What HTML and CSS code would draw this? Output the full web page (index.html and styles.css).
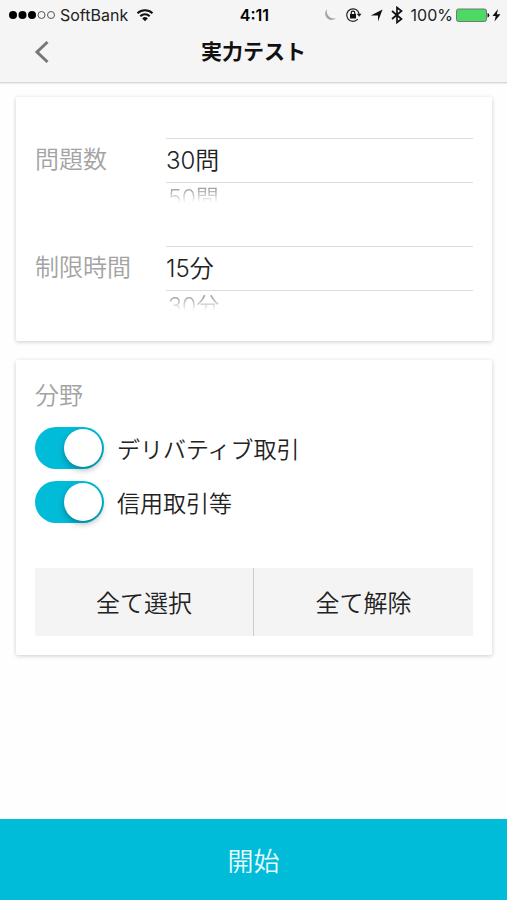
FILE: index.html
```html
<!DOCTYPE html>
<html lang="ja">
<head>
<meta charset="utf-8">
<meta name="viewport" content="width=device-width, initial-scale=1">
<title>実力テスト</title>
<link rel="stylesheet" href="styles.css">
</head>
<body>
<header class="header">
  <div class="status">
    <div class="status-left">
      <svg class="icon" width="48" height="16" viewBox="0 0 48 16" aria-hidden="true">
        <g fill="#000"><circle cx="5" cy="8" r="4"/><circle cx="14.500" cy="8" r="4"/><circle cx="24" cy="8" r="4"/></g>
        <g fill="none" stroke="#555" stroke-width="1"><circle cx="33.500" cy="8" r="3.500"/><circle cx="43" cy="8" r="3.500"/></g>
      </svg>
      <span class="carrier">SoftBank</span>
      <svg class="icon" width="18" height="14" viewBox="0 0 18 14" aria-hidden="true">
        <g fill="none" stroke="#111" stroke-width="2"><path d="M1.500 5.200a10.800 10.800 0 0 1 15 0"/><path d="M4.300 8.200a6.700 6.700 0 0 1 9.400 0"/></g>
        <path d="M9 13.200 6.200 10.400a4 4 0 0 1 5.600 0z" fill="#111"/>
      </svg>
    </div>
    <time class="clock">4:11</time>
    <div class="status-right">
      <svg class="icon" width="14" height="14" viewBox="0 0 14 14" aria-hidden="true"><path d="M4.200 1A6.300 6.300 0 1 0 13 10 7 7 0 0 1 4.200 1z" fill="#a5a5a5"/></svg>
      <svg class="icon" width="17" height="16" viewBox="0 0 17 16" aria-hidden="true">
        <path d="M12.800 12.200A6.300 6.300 0 1 1 14.200 7" fill="none" stroke="#222" stroke-width="1.200"/>
        <path d="M11.600 6.800h5L14.200 9.800z" fill="#222"/>
        <rect x="5" y="7" width="6" height="4.500" fill="#111"/><path d="M6.200 7.200V6a1.800 1.800 0 0 1 3.600 0v1.200" fill="none" stroke="#111" stroke-width="1.200"/>
      </svg>
      <svg class="icon" width="13" height="14" viewBox="0 0 13 14" aria-hidden="true"><path d="M12.500 1.500 8 13.500V7.500H.8z" fill="#111"/></svg>
      <svg class="icon" width="12" height="18" viewBox="0 0 12 18" aria-hidden="true"><path d="M1 5 10.500 13 6 16.500V1.500L10.500 5 1 13" fill="none" stroke="#111" stroke-width="1.700"/></svg>
      <span class="percent">100%</span>
      <svg class="icon" width="46" height="16" viewBox="0 0 46 16" aria-hidden="true">
        <rect x="1.500" y="2" width="30" height="12.500" rx="2" fill="#4cd964" stroke="#777" stroke-width="1"/>
        <path d="M32.500 6a2.300 2.300 0 0 1 0 4.500z" fill="#111"/>
        <path d="M43 2 37.500 9h3.200L39.500 14.500 45.500 7.200h-3.700z" fill="#111"/>
      </svg>
    </div>
  </div>
  <nav class="nav">
    <button class="back" type="button" aria-label="戻る">
      <svg class="icon" width="16" height="24" viewBox="0 0 16 24" aria-hidden="true"><path d="M13.500 2 3 12l10.500 10" fill="none" stroke="#777" stroke-width="3"/></svg>
    </button>
    <h1 class="title">実力テスト</h1>
  </nav>
</header>

<main class="content">
  <section class="card card-pickers">
    <div class="picker-row">
      <label class="caption" for="count">問題数</label>
      <div class="picker">
        <select class="picker-value" id="count"><option>30問</option><option>50問</option></select>
        <div class="picker-next" aria-hidden="true">50問</div>
      </div>
    </div>
    <div class="picker-row">
      <label class="caption" for="limit">制限時間</label>
      <div class="picker">
        <select class="picker-value" id="limit"><option>15分</option><option>30分</option></select>
        <div class="picker-next" aria-hidden="true">30分</div>
      </div>
    </div>
  </section>

  <section class="card card-fields">
    <h2 class="caption">分野</h2>
    <label class="switch-row"><input class="switch" type="checkbox" checked><span>デリバティブ取引</span></label>
    <label class="switch-row"><input class="switch" type="checkbox" checked><span>信用取引等</span></label>
    <div class="actions">
      <button class="action" type="button">全て選択</button>
      <button class="action" type="button">全て解除</button>
    </div>
  </section>
</main>

<button class="start" type="button">開始</button>
</body>
</html>
```

FILE: styles.css
```css
* {
  box-sizing: border-box;
}

body {
  margin: 0;
  min-height: 100vh;
  display: flex;
  flex-direction: column;
  background: #fefefe;
  color: #222;
  font-family: Inter, "Noto Sans CJK JP", sans-serif;
}

button,
select {
  margin: 0;
  padding: 0;
  border: 0;
  border-radius: 0;
  background: none;
  color: inherit;
  font: inherit;
}

.icon {
  display: block;
  flex: none;
}

.header {
  background: #f5f5f5;
  border-bottom: 1px solid #d8d8d8;
  box-shadow: 0 1px 1px #eee;
}

.status {
  display: grid;
  grid-template-columns: 1fr auto 1fr;
  align-items: center;
  height: 30px;
  padding: 0 6px 0 8px;
  font-size: 16px;
  line-height: 20px;
}

.status-left,
.status-right {
  display: flex;
  align-items: center;
}

.status-left {
  gap: 4px;
}

.carrier {
  margin-right: 4px;
}

.status-right {
  justify-content: flex-end;
  gap: 8px;
}

.percent {
  margin-right: -6px;
}

.clock {
  font-weight: 600;
  color: #000;
}

.nav {
  display: grid;
  grid-template-columns: 52px 1fr 52px;
  align-items: start;
  height: 52px;
  padding: 0 16px;
}

.back {
  display: flex;
  align-items: center;
  justify-content: center;
  height: 44px;
}

.title {
  margin: 0;
  text-align: center;
  font-size: 21px;
  font-weight: 700;
  line-height: 44px;
  color: #111;
}

.content {
  flex: 1;
  display: flex;
  flex-direction: column;
  gap: 19px;
  padding: 14px 15px 19px 16px;
}

.card {
  padding: 19px;
  border-radius: 2px;
  background: #fff;
  box-shadow: 0 1px 4px rgba(0, 0, 0, 0.2);
}

.card-pickers {
  padding-top: 9px;
}

.caption {
  margin: 0;
  font-size: 24px;
  font-weight: 350;
  line-height: 34px;
  color: #a3a3a3;
}

.picker-row {
  display: grid;
  grid-template-columns: 131px 1fr;
  align-items: center;
  height: 108px;
}

.picker {
  height: 108px;
  padding-top: 32px;
  font-size: 24px;
  font-weight: 350;
}

.picker-value {
  display: block;
  width: 100%;
  height: 45px;
  border-top: 1px solid #ddd;
  border-bottom: 1px solid #ddd;
  appearance: none;
}

.picker-next {
  height: 30px;
  padding-left: 2px;
  font-size: 23px;
  line-height: 30px;
  color: #999;
  mask-image: linear-gradient(#000 4px, transparent 20px);
}

.card-fields .caption {
  margin-bottom: 8px;
}

.switch-row {
  display: flex;
  align-items: center;
  gap: 13px;
  height: 54px;
  font-size: 23px;
  font-weight: 350;
}

.switch {
  flex: none;
  width: 69px;
  height: 42px;
  margin: 0;
  padding: 2px;
  border-radius: 21px;
  background: #bbb;
  appearance: none;
}

.switch::before {
  content: "";
  display: block;
  width: 38px;
  height: 38px;
  border-radius: 50%;
  background: #fff;
  box-shadow: 0 3px 6px rgba(0, 0, 0, 0.3);
}

.switch:checked {
  background: #00bcd9;
}

.switch:checked::before {
  margin-left: auto;
}

.actions {
  display: grid;
  grid-template-columns: 1fr 1fr;
  margin-top: 39px;
  background: #f4f4f4;
}

.action {
  height: 68px;
  padding-bottom: 2px;
  font-size: 24px;
  font-weight: 350;
}

.action:first-child {
  border-right: 1px solid #ccc;
}

.start {
  height: 81px;
  background: #00bcd9;
  color: #e6fbff;
  font-size: 26px;
  font-weight: 350;
}
```
